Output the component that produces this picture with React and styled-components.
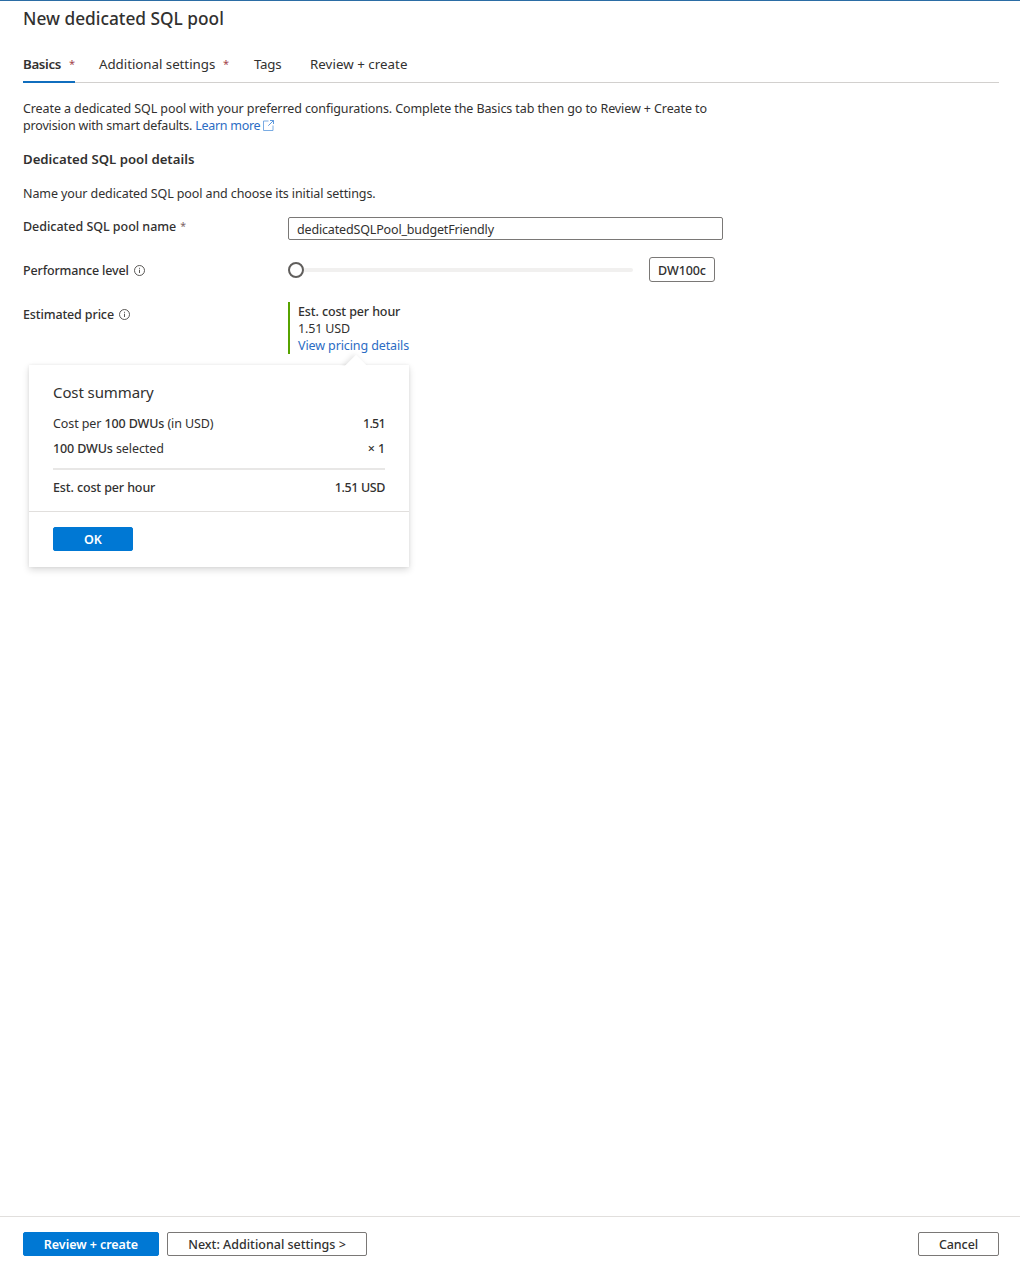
import React from "react";
import styled, { createGlobalStyle } from "styled-components";

const GlobalStyle = createGlobalStyle`
  *, *::before, *::after { box-sizing: border-box; }
  body {
    margin: 0;
    background: #fff;
    color: #323130;
    font: 400 12.5px/17px "Noto Sans", "Open Sans", sans-serif;
    letter-spacing: -0.1px;
  }
  button, input { font: inherit; letter-spacing: inherit; color: inherit; }
`;

const Page = styled.div`
  display: flex;
  flex-direction: column;
  height: 1268px;
  border-top: 1px solid #2b6da5;
`;

const Content = styled.main`
  flex: 1;
  padding: 6px 21px 0 23px;
`;

const Title = styled.h1`
  margin: 0;
  font-size: 17.3px;
  font-weight: 500;
  line-height: 24px;
  letter-spacing: 0;
`;

const TabBar = styled.nav`
  display: flex;
  gap: 24px;
  height: 31px;
  margin-top: 21px;
  border-bottom: 1px solid #d2d0ce;
`;

const Tab = styled.a`
  display: flex;
  height: 31px;
  line-height: 24px;
  font-size: 13.3px;
  white-space: nowrap;
  width: ${(p) => p.$width}px;
  margin-right: ${(p) => p.$after ?? 0}px;
  letter-spacing: ${(p) => p.$track}px;
  font-weight: ${(p) => (p.$active ? 600 : 400)};
  border-bottom: 2px solid ${(p) => (p.$active ? "#106ebe" : "transparent")};
`;

const TabMark = styled.span`
  margin-left: auto;
  color: #a4464c;
  font-size: 11px;
  font-weight: 400;
  letter-spacing: 0;
`;

const Intro = styled.p`
  margin: 17px 0 0;
  width: 700px;
`;

const Line = styled.span`
  display: flex;
  align-items: center;
  white-space: pre;
  letter-spacing: ${(p) => p.$track}px;
`;

const Link = styled.a`
  color: #2b6cc4;
  letter-spacing: ${(p) => p.$track ?? -0.1}px;
`;

const SectionTitle = styled.h2`
  margin: 17px 0 0;
  font-size: 13.2px;
  font-weight: 600;
  line-height: 17px;
  letter-spacing: 0;
`;

const SectionNote = styled.p`
  margin: 17px 0 0;
`;

const FormRow = styled.div`
  display: grid;
  grid-template-columns: 265px 1fr;
  align-items: start;
  margin-top: ${(p) => p.$top}px;
`;

const Label = styled.label`
  display: flex;
  align-items: center;
  height: 17px;
  margin-top: ${(p) => p.$top}px;
  font-weight: 500;
  letter-spacing: ${(p) => p.$track}px;
`;

const Required = styled.span`
  margin-left: 4px;
  color: #7d6466;
  font-size: 10.5px;
  font-weight: 400;
`;

const NameInput = styled.input`
  width: 435px;
  height: 23px;
  padding: 1px 8px 0;
  border: 1px solid #7a7876;
  border-radius: 2px;
  outline: none;
  letter-spacing: -0.16px;
`;

const Slider = styled.div`
  display: flex;
  align-items: center;
`;

const Thumb = styled.span`
  width: 16px;
  height: 16px;
  border: 2px solid #605e5c;
  border-radius: 50%;
`;

const Track = styled.span`
  width: 329px;
  height: 4px;
  margin-right: 16px;
  border-radius: 0 4px 4px 0;
  background: #f1f0ef;
`;

const LevelBox = styled.output`
  width: 66px;
  height: 25px;
  padding-top: 1px;
  border: 1px solid #7a7876;
  border-radius: 3px;
  font-weight: 500;
  line-height: 24px;
  text-align: center;
`;

const Estimate = styled.div`
  position: relative;
  width: 140px;
  height: 52px;
  padding: 1px 0 0 8px;
  border-left: 2px solid #57a300;
`;

const Strong = styled.strong`
  font-weight: 500;
  letter-spacing: ${(p) => p.$track ?? -0.12}px;
`;

const Callout = styled.section`
  position: absolute;
  top: 63px;
  left: -261px;
  width: 380px;
  height: 202px;
  background: #fff;
  box-shadow: 0 3px 7px rgba(0, 0, 0, 0.14), 0 0 3px rgba(0, 0, 0, 0.07);

  &::before {
    content: "";
    position: absolute;
    top: -7px;
    left: 319px;
    width: 16px;
    height: 16px;
    background: #fff;
    transform: rotate(45deg);
    box-shadow: -2px 1px 5px rgba(0, 0, 0, 0.1);
    clip-path: polygon(-8px -8px, 24px -8px, -8px 24px);
  }
`;

const CalloutBody = styled.div`
  position: relative;
  height: 147px;
  padding: 16px 24px 0;
  border-bottom: 1px solid #e1dfdd;
`;

const CalloutTitle = styled.h3`
  margin: 0 0 12px;
  font-size: 15px;
  font-weight: 400;
  line-height: 22px;
  letter-spacing: -0.1px;
`;

const CostRow = styled.div`
  display: flex;
  justify-content: space-between;
  height: 17px;
  margin-bottom: 8px;
  white-space: pre;
`;

const CostDivider = styled.hr`
  height: 2px;
  margin: 11px 0 9px;
  border: 0;
  background: #e8e7e6;
`;

const Button = styled.button`
  width: ${(p) => p.$width}px;
  height: 24px;
  padding: 2px 0 0;
  border: 1px solid ${(p) => (p.$primary ? "#0078d4" : "#7a7876")};
  border-radius: 2px;
  background: ${(p) => (p.$primary ? "#0078d4" : "#fff")};
  color: ${(p) => (p.$primary ? "#fff" : "#323130")};
  font-weight: ${(p) => (p.$primary ? 600 : 500)};
  line-height: 20px;
  letter-spacing: ${(p) => p.$track ?? 0}px;
`;

const CalloutActions = styled.div`
  padding: 15px 24px;
`;

const Footer = styled.footer`
  display: flex;
  gap: 8px;
  height: 52px;
  padding: 15px 21px 0 23px;
  border-top: 1px solid #e1dfdd;
`;

const Spacer = styled.span`
  flex: 1;
`;

const Icon = styled.svg`
  flex: none;
  margin-left: ${(p) => p.$left}px;
`;

const InfoIcon = () => (
  <Icon $left={5} width="11" height="11" viewBox="0 0 11 11" fill="none" stroke="#484644">
    <circle cx="5.5" cy="5.5" r="5" strokeWidth="0.9" />
    <path d="M5.5 4.7v3.3M5.5 2.8v1" strokeWidth="0.9" />
  </Icon>
);

const ExternalIcon = () => (
  <Icon $left={3} width="11" height="11" viewBox="0 0 11 11" fill="none">
    <path d="M5.5 1H.5v9.5H10V5.5" stroke="#6ba3e0" strokeWidth="0.9" />
    <path d="M7 .5h3.5V4M10.5.5 5.3 5.7" stroke="#4e8fd9" strokeWidth="0.9" />
  </Icon>
);

export default function App() {
  return (
    <Page>
      <GlobalStyle />
      <Content>
        <Title>New dedicated SQL pool</Title>
        <TabBar>
          <Tab $active $width={52} $track={-0.35}>Basics<TabMark>*</TabMark></Tab>
          <Tab $width={130} $after={1} $track={-0.03}>Additional settings<TabMark>*</TabMark></Tab>
          <Tab $width={32} $track={-0.25}>Tags</Tab>
          <Tab $width={100} $track={0.05}>Review + create</Tab>
        </TabBar>
        <Intro>
          <Line $track={-0.095}>
            Create a dedicated SQL pool with your preferred configurations. Complete the Basics tab then go to Review + Create to
          </Line>
          <Line $track={-0.17}>
            {"provision with smart defaults. "}
            <Link $track={-0.28}>Learn more</Link>
            <ExternalIcon />
          </Line>
        </Intro>
        <SectionTitle>Dedicated SQL pool details</SectionTitle>
        <SectionNote>Name your dedicated SQL pool and choose its initial settings.</SectionNote>
        <FormRow $top={15}>
          <Label $top={1} $track={-0.03}>Dedicated SQL pool name<Required>*</Required></Label>
          <NameInput defaultValue="dedicatedSQLPool_budgetFriendly" />
        </FormRow>
        <FormRow $top={17}>
          <Label $top={5} $track={-0.15}>Performance level<InfoIcon /></Label>
          <Slider>
            <Thumb />
            <Track />
            <LevelBox>DW100c</LevelBox>
          </Slider>
        </FormRow>
        <FormRow $top={20}>
          <Label $top={4} $track={-0.13}>Estimated price<InfoIcon /></Label>
          <Estimate>
            <Line><Strong>Est. cost per hour</Strong></Line>
            <Line $track={-0.15}>1.51 USD</Line>
            <Line><Link $track={-0.11}>View pricing details</Link></Line>
            <Callout>
              <CalloutBody>
                <CalloutTitle>Cost summary</CalloutTitle>
                <CostRow>
                  <span>Cost per <Strong>100 DWUs</Strong> (in USD)</span>
                  <Strong $track={-0.7}>1.51</Strong>
                </CostRow>
                <CostRow>
                  <span><Strong>100 DWUs</Strong> selected</span>
                  <Strong>× 1</Strong>
                </CostRow>
                <CostDivider />
                <CostRow>
                  <Strong>Est. cost per hour</Strong>
                  <Strong $track={-0.4}>1.51 USD</Strong>
                </CostRow>
              </CalloutBody>
              <CalloutActions>
                <Button $primary $width={80}>OK</Button>
              </CalloutActions>
            </Callout>
          </Estimate>
        </FormRow>
      </Content>
      <Footer>
        <Button $primary $width={136} $track={-0.05}>Review + create</Button>
        <Button $width={200}>Next: Additional settings &gt;</Button>
        <Spacer />
        <Button $width={81} $track={-0.1}>Cancel</Button>
      </Footer>
    </Page>
  );
}
